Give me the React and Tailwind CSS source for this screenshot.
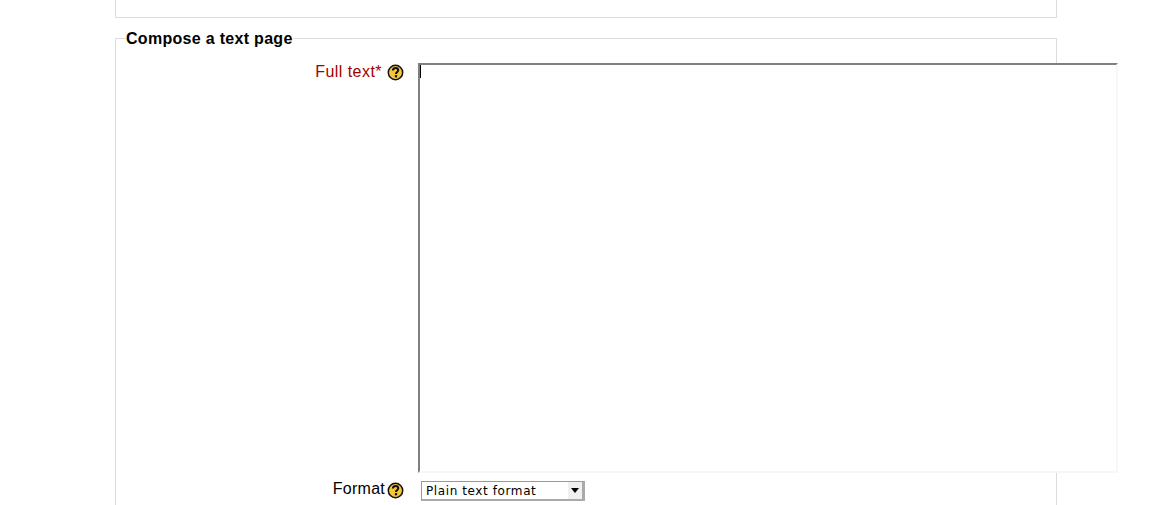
import React from 'react';

const HelpIcon = () => (
  <svg width="17" height="17" viewBox="0 0 17 17" className="shrink-0">
    <circle cx="8.5" cy="8.5" r="7.2" fill="#f5c73a" stroke="#111" strokeWidth="1.5" />
    <path d="M5.9 6.6 C5.9 4.8 7.2 4 8.5 4 C10.1 4 11.2 5 11.2 6.3 C11.2 8 9 8 9 10" fill="none" stroke="#111" strokeWidth="2.1" />
    <rect x="7.9" y="11.1" width="2.2" height="2.2" fill="#111" />
  </svg>
);

const App = () => {
  return (
    <div className="h-[505px] overflow-hidden bg-white font-['Liberation_Sans',Arial,sans-serif] text-black">
      <div className="ml-[115px] w-[942px]">
        {/* Previous section, cut off by the top of the page */}
        <div className="h-[18px] border-x border-b border-[#dcdcdc]" />

        <fieldset className="mt-[10px] h-[500px] min-w-0 border border-[#dcdcdc] pl-[10px] pt-[11px]">
          <legend className="pt-[2px] text-[16px] font-bold leading-[18px] tracking-[0.3px]">Compose a text page</legend>

          <div className="-ml-[10px] flex">
            <div className="flex w-[288px] shrink-0 items-start justify-end gap-[5px] pt-[4px]">
              <span className="text-[16px] leading-[18px] tracking-[0.45px] text-[#a00000]">Full text*</span>
              <span className="mt-[1px]"><HelpIcon /></span>
            </div>
            <div className="relative ml-[14px] mt-[4px] shrink-0">
              <textarea className="block h-[410px] w-[700px] resize-none border-2 border-t-[#808080] border-l-[#808080] border-r-[#f7f7f7] border-b-[#f7f7f7] bg-white outline-none" />
              {/* text caret */}
              <div className="absolute left-[2px] top-[2px] h-[13px] w-px bg-black" />
            </div>
          </div>

          <div className="-ml-[10px] mt-[6px] flex items-center">
            <div className="flex w-[288px] shrink-0 items-center justify-end gap-[2px]">
              <span className="mb-[2px] text-[16px] leading-[18px] tracking-[0.25px]">Format</span>
              <HelpIcon />
            </div>
            <div className="ml-[17px] mt-[2px] flex h-[20px] w-[164px] items-center justify-between border border-[#999] border-b-2 border-r-[3px] border-b-[#aaa] border-r-[#aaa] bg-white pl-[4px] font-['DejaVu_Sans',sans-serif] text-[12px] tracking-[0.6px]">
              <span className="pt-[1px]">Plain text format</span>
              <span className="flex h-full w-[14px] items-center justify-center bg-[#f0f0f0]">
                <span className="h-0 w-0 border-x-[4px] border-t-[5px] border-x-transparent border-t-black" />
              </span>
            </div>
          </div>
        </fieldset>
      </div>
    </div>
  );
};

export default App;
